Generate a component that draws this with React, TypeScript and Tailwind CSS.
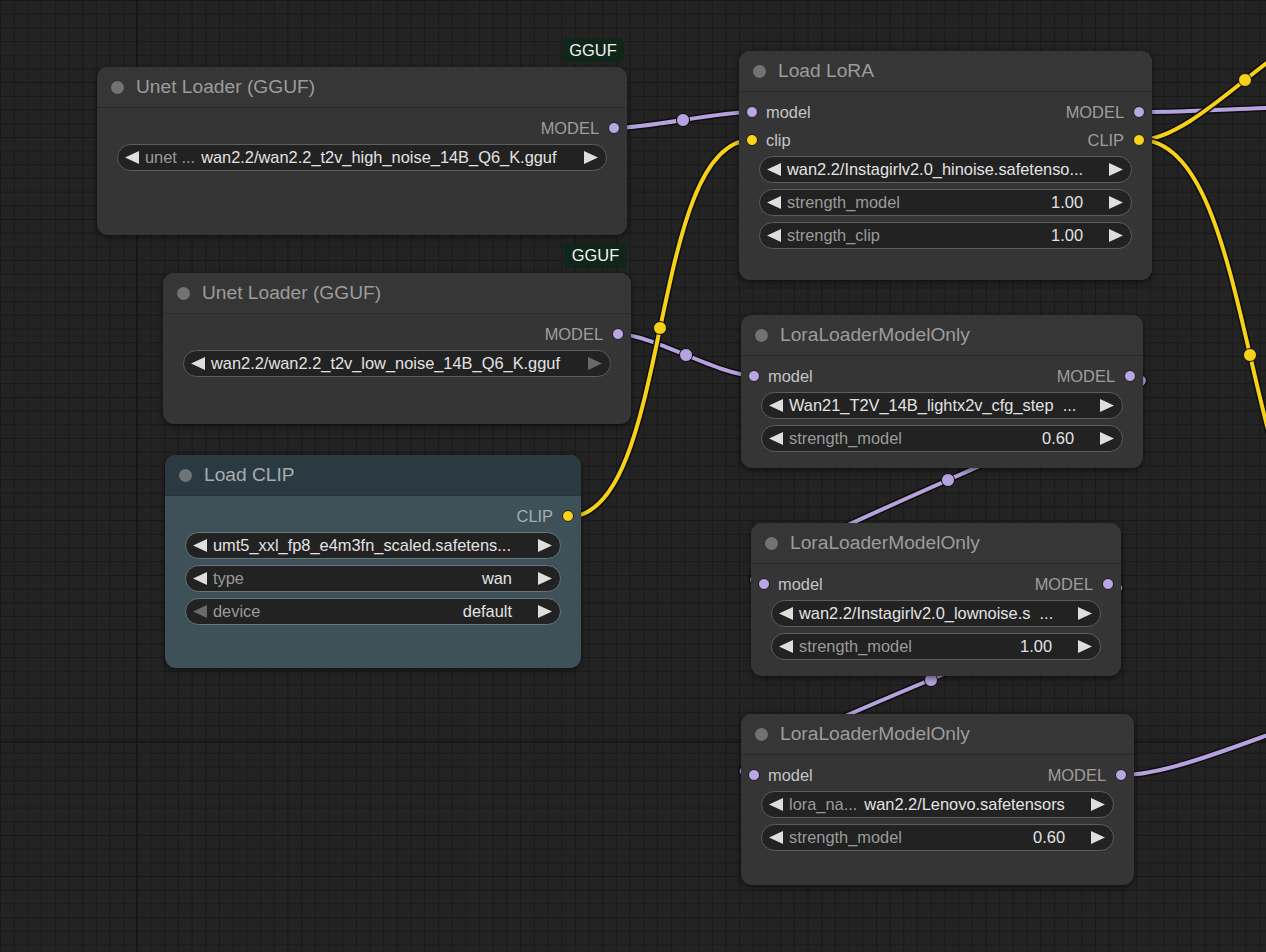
import React from "react";

type SlotColor = "purple" | "yellow";
type Row = {
  input?: { label: string; color: SlotColor };
  output?: { label: string; color: SlotColor };
};
type Widget = {
  label?: string;
  value: string;
  align: "left" | "right";
  valueClass?: string;
  leftDim?: boolean;
  rightDim?: boolean;
};

const PURPLE = "#b4a3de";
const YELLOW = "#f7d117";

function Arrow({ dir, dim }: { dir: "left" | "right"; dim?: boolean }) {
  return (
    <svg width="14" height="13" viewBox="0 0 14 13" className="shrink-0">
      <polygon
        points={dir === "left" ? "0,6.5 14,0 14,13" : "0,0 14,6.5 0,13"}
        fill={dim ? "#6a6a6a" : "#dedede"}
      />
    </svg>
  );
}

function Dot({ color }: { color: SlotColor }) {
  return (
    <span
      className={
        color === "purple"
          ? "block w-[12px] h-[12px] rounded-full bg-[#b8a7e2] border border-[#1c1c1c] shrink-0"
          : "block w-[12px] h-[12px] rounded-full bg-[#f9d41b] border border-[#1c1c1c] shrink-0"
      }
    />
  );
}

function WidgetRow({ w, cyan }: { w: Widget; cyan?: boolean }) {
  return (
    <div
      className={
        cyan
          ? "h-[27px] rounded-full border border-[#66767c] bg-[#222222] flex items-center pl-[7px] pr-[8px] text-[16.4px] whitespace-nowrap overflow-hidden"
          : "h-[27px] rounded-full border border-[#5e5e5e] bg-[#222222] flex items-center pl-[7px] pr-[8px] text-[16.4px] whitespace-nowrap overflow-hidden"
      }
    >
      <Arrow dir="left" dim={w.leftDim} />
      {w.label && <span className="ml-[6px] text-[#9a9a9a]">{w.label}</span>}
      {w.align === "left" && (
        <span className={w.valueClass ?? "ml-[6px] text-[#e2e2e2]"}>{w.value}</span>
      )}
      <span className="flex-1" />
      {w.align === "right" && <span className="mr-[26px] text-[#e2e2e2]">{w.value}</span>}
      <Arrow dir="right" dim={w.rightDim} />
    </div>
  );
}

type NodeProps = {
  pos: string;
  title: string;
  rows: Row[];
  widgets: Widget[];
  cyan?: boolean;
};

function Node({ pos, title, rows, widgets, cyan }: NodeProps) {
  return (
    <div
      className={
        "absolute rounded-[11px] overflow-hidden shadow-[0_2px_6px_rgba(0,0,0,0.55)] flex flex-col " +
        pos +
        (cyan ? " bg-[#3e5159]" : " bg-[#353535]")
      }
    >
      <div
        className={
          cyan
            ? "h-[41px] shrink-0 flex items-center pl-[14px] bg-[#2b3a41] border-b border-[#27343a]"
            : "h-[41px] shrink-0 flex items-center pl-[14px] bg-[#363636] border-b border-[#2b2b2b]"
        }
      >
        <span className={cyan ? "w-[13px] h-[13px] rounded-full bg-[#6d7579]" : "w-[13px] h-[13px] rounded-full bg-[#727272]"} />
        <span className={cyan ? "ml-[12px] text-[19.2px] text-[#a3adb1]" : "ml-[12px] text-[19.2px] text-[#9c9c9c]"}>
          {title}
        </span>
      </div>
      <div className="pt-[6px] flex flex-col">
        {rows.map((r, i) => (
          <div key={i} className="h-[28px] flex items-center justify-between px-[7px]">
            <div className="flex items-center">
              {r.input && (
                <>
                  <Dot color={r.input.color} />
                  <span className="ml-[8px] text-[16.4px] text-[#c4c4c4]">{r.input.label}</span>
                </>
              )}
            </div>
            <div className="flex items-center">
              {r.output && (
                <>
                  <span className={cyan ? "mr-[9px] text-[16.4px] text-[#a4afb3]" : "mr-[9px] text-[16.4px] text-[#9e9e9e]"}>
                    {r.output.label}
                  </span>
                  <Dot color={r.output.color} />
                </>
              )}
            </div>
          </div>
        ))}
        <div className="mt-[2px] mx-[20px] flex flex-col gap-[6px]">
          {widgets.map((w, i) => (
            <WidgetRow key={i} w={w} cyan={cyan} />
          ))}
        </div>
      </div>
    </div>
  );
}

function Badge({ pos }: { pos: string }) {
  return (
    <div
      className={
        "absolute rounded-[5px] bg-[#10261a] text-[#f2f2f2] text-[16.4px] flex items-center justify-center " + pos
      }
    >
      GGUF
    </div>
  );
}

type Link = { d: string; color: string; dot?: [number, number] };

const links: Link[] = [
  { d: "M614,128 C649,128 717,112 752,112", color: PURPLE, dot: [683, 120] },
  { d: "M617,334 C653,334 719,376 755,376", color: PURPLE, dot: [686, 355] },
  { d: "M568,517 C673,517 647,140 752,140", color: YELLOW, dot: [660, 328] },
  { d: "M1131,376 C1236,376 660,584 765,584", color: PURPLE, dot: [948, 480] },
  { d: "M1108,584 C1209,584 653,775 754,775", color: PURPLE, dot: [931, 680] },
  { d: "M1140,112 C1200,112 1240,108 1300,107", color: PURPLE },
  { d: "M1140,140 C1200,140 1290,20 1350,20", color: YELLOW, dot: [1245, 80] },
  { d: "M1140,140 C1261,140 1239,570 1360,570", color: YELLOW, dot: [1250, 355] },
  { d: "M1122,775 C1194,775 1328,700 1400,700", color: PURPLE },
];

export default function App() {
  return (
    <div className="relative w-[1266px] h-[952px] overflow-hidden bg-[#232323] font-['Liberation_Sans',Arial,sans-serif]">
      {/* grid */}
      <div className="absolute inset-0 bg-[linear-gradient(to_right,#191919_1px,transparent_1px),linear-gradient(to_bottom,#191919_1px,transparent_1px)] bg-[size:13.7px_13.7px]" />
      <div className="absolute left-[136px] top-0 w-[2px] h-full bg-[#171717]" />
      <div className="absolute top-[741px] left-0 h-[2px] w-full bg-[#171717]" />

      {/* links */}
      <svg className="absolute inset-0 pointer-events-none" width="1266" height="952">
        {links.map((l, i) => (
          <g key={i}>
            <path d={l.d} fill="none" stroke="#0e0e0e" strokeWidth={7} />
            <path d={l.d} fill="none" stroke={l.color} strokeWidth={4} />
            {l.dot && <circle cx={l.dot[0]} cy={l.dot[1]} r={6.5} fill={l.color} stroke="#0e0e0e" strokeWidth={1} />}
          </g>
        ))}
      </svg>

      <Badge pos="left-[562px] top-[38px] w-[62px] h-[24px]" />
      <Node
        pos="left-[97px] top-[67px] w-[530px] h-[168px]"
        title="Unet Loader (GGUF)"
        rows={[{ output: { label: "MODEL", color: "purple" } }]}
        widgets={[
          {
            label: "unet ...",
            value: "wan2.2/wan2.2_t2v_high_noise_14B_Q6_K.gguf",
            align: "left",
            valueClass: "ml-[6px] text-[#e2e2e2]",
          },
        ]}
      />

      <Badge pos="left-[564px] top-[243px] w-[63px] h-[25px]" />
      <Node
        pos="left-[163px] top-[273px] w-[468px] h-[151px]"
        title="Unet Loader (GGUF)"
        rows={[{ output: { label: "MODEL", color: "purple" } }]}
        widgets={[{ value: "wan2.2/wan2.2_t2v_low_noise_14B_Q6_K.gguf", align: "left", rightDim: true }]}
      />

      <Node
        cyan
        pos="left-[165px] top-[455px] w-[416px] h-[213px]"
        title="Load CLIP"
        rows={[{ output: { label: "CLIP", color: "yellow" } }]}
        widgets={[
          { value: "umt5_xxl_fp8_e4m3fn_scaled.safetens...", align: "left" },
          { label: "type", value: "wan", align: "right" },
          { label: "device", value: "default", align: "right", leftDim: true },
        ]}
      />

      <Node
        pos="left-[739px] top-[51px] w-[413px] h-[229px]"
        title="Load LoRA"
        rows={[
          { input: { label: "model", color: "purple" }, output: { label: "MODEL", color: "purple" } },
          { input: { label: "clip", color: "yellow" }, output: { label: "CLIP", color: "yellow" } },
        ]}
        widgets={[
          { value: "wan2.2/Instagirlv2.0_hinoise.safetenso...", align: "left" },
          { label: "strength_model", value: "1.00", align: "right" },
          { label: "strength_clip", value: "1.00", align: "right" },
        ]}
      />

      <Node
        pos="left-[741px] top-[315px] w-[402px] h-[153px]"
        title="LoraLoaderModelOnly"
        rows={[{ input: { label: "model", color: "purple" }, output: { label: "MODEL", color: "purple" } }]}
        widgets={[
          { value: "Wan21_T2V_14B_lightx2v_cfg_step  ...", align: "left", valueClass: "ml-[6px] text-[#e2e2e2] whitespace-pre" },
          { label: "strength_model", value: "0.60", align: "right" },
        ]}
      />

      <Node
        pos="left-[751px] top-[523px] w-[370px] h-[153px]"
        title="LoraLoaderModelOnly"
        rows={[{ input: { label: "model", color: "purple" }, output: { label: "MODEL", color: "purple" } }]}
        widgets={[
          { value: "wan2.2/Instagirlv2.0_lownoise.s  ...", align: "left", valueClass: "ml-[6px] text-[#e2e2e2] whitespace-pre" },
          { label: "strength_model", value: "1.00", align: "right" },
        ]}
      />

      <Node
        pos="left-[741px] top-[714px] w-[393px] h-[171px]"
        title="LoraLoaderModelOnly"
        rows={[{ input: { label: "model", color: "purple" }, output: { label: "MODEL", color: "purple" } }]}
        widgets={[
          {
            label: "lora_na...",
            value: "wan2.2/Lenovo.safetensors",
            align: "left",
            valueClass: "ml-[7px] text-[#e2e2e2]",
          },
          { label: "strength_model", value: "0.60", align: "right" },
        ]}
      />
    </div>
  );
}
